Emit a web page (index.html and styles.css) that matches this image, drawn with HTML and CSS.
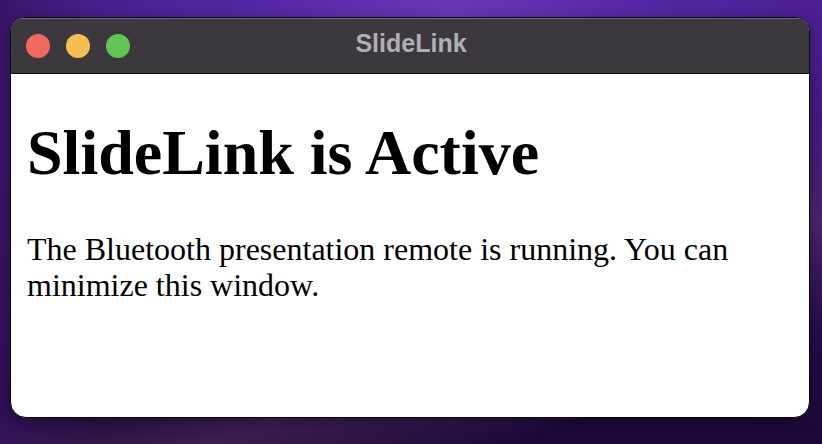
FILE: index.html
```html
<!DOCTYPE html>
<html lang="en">
<head>
  <meta charset="UTF-8" />
  <title>SlideLink</title>
  <link rel="stylesheet" href="styles.css">
</head>
<body>

  <div class="window">
    <!-- Barra de titulo -->
    <div class="titlebar">
      <div class="lights">
        <span class="light close"></span>
        <span class="light min"></span>
        <span class="light max"></span>
      </div>
      <strong>SlideLink</strong>
    </div>

    <!-- Conteudo -->
    <div class="content">
      <h1>SlideLink is Active</h1>
      <p>The Bluetooth presentation remote is running. You can minimize this window.</p>
    </div>
  </div>

</body>
</html>
```

FILE: styles.css
```css
* { margin: 0; padding: 0; box-sizing: border-box; }

html, body { height: 100%; }

body {
  padding: 17px 12px 0 10px;
  overflow: hidden;
  background:
    linear-gradient(160deg, transparent 55%, rgba(120, 70, 120, 0.35) 70%, transparent 85%),
    radial-gradient(ellipse at 55% 0%, #6a36b8 0%, #5224a0 35%, transparent 70%),
    linear-gradient(100deg, #3a1468 0%, transparent 20%),
    linear-gradient(180deg, #4a1d8a 0%, #2a0d55 60%, #1c0838 100%);
  background-color: #2a0d55;
}

.window {
  width: 800px;
  height: 401px;
  display: flex;
  flex-direction: column;
  border: 1px solid #0a0a0c;
  border-radius: 14px 14px 16px 16px;
  overflow: hidden;
  background: #fff;
  box-shadow: 0 4px 14px rgba(0, 0, 0, 0.35);
}

.titlebar {
  height: 56px;
  flex: 0 0 auto;
  display: flex;
  align-items: center;
  justify-content: center;
  position: relative;
  padding-bottom: 5px;
  background: #3b393e;
  border-top: 1px solid #6f6d72;
  border-bottom: 1px solid #0f0f10;
}
.titlebar strong {
  font-family: "Liberation Sans", Arial, sans-serif;
  font-size: 25px;
  color: #b1afb4;
  margin-left: 2px;
}

.lights {
  position: absolute;
  left: 15px;
  top: 15px;
  display: flex;
  gap: 16px;
}
.light {
  width: 24px;
  height: 24px;
  border-radius: 50%;
}
.close { background: #ee6a5e; }
.min { background: #f5bf4f; }
.max { background: #61c554; }

.content {
  flex: 1;
  padding: 0 16px;
  font-family: "Liberation Serif", "Times New Roman", serif;
  color: #000;
}
.content h1 {
  font-size: 64px;
  margin: 42px 0 41px;
  line-height: 1.15;
}
.content p {
  font-size: 32px;
  line-height: 36px;
}
```
